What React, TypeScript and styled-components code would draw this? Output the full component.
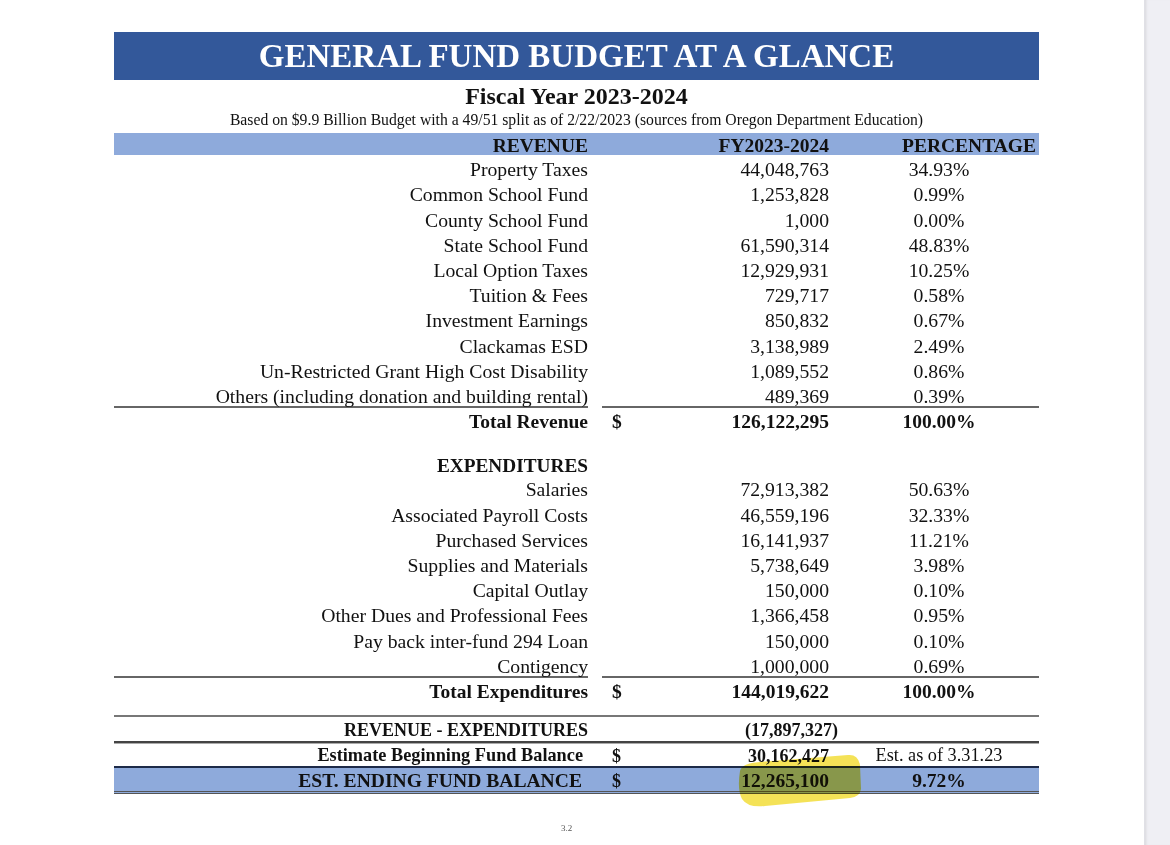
import React from "react";
import styled, { createGlobalStyle, css } from "styled-components";

const GlobalStyle = createGlobalStyle`
  html, body { margin: 0; padding: 0; background: #ffffff; }
  body { font-family: "Liberation Serif", "Times New Roman", serif; color: #111; }
`;

const Screen = styled.div`
  display: flex;
  width: 1170px;
  height: 845px;
  overflow: hidden;
`;

const Page = styled.main`
  flex: 1;
  padding: 32px 0 0 114px;
`;

const SideStrip = styled.aside`
  width: 25px;
  background: #efeff4;
  border-left: 1px solid #e0e0e6;
  box-shadow: inset 3px 0 3px -2px rgba(0, 0, 0, 0.1);
`;

const Sheet = styled.section`
  width: 925px;
  display: flex;
  flex-direction: column;
`;

const TitleBar = styled.h1`
  margin: 0;
  height: 48px;
  background: #33589a;
  color: #ffffff;
  font: bold 33px/48px "Liberation Serif", "Times New Roman", serif;
  text-align: center;
  white-space: nowrap;
`;

const FiscalYear = styled.h2`
  margin: 3px 0 0;
  font: bold 24px/26px "Liberation Serif", "Times New Roman", serif;
  text-align: center;
  white-space: nowrap;
`;

const Subtitle = styled.p`
  margin: 2px 0 0;
  font: 15.7px/17px "Liberation Serif", "Times New Roman", serif;
  text-align: center;
  white-space: nowrap;
`;

type RowProps = {
  $h?: number;
  $rule?: boolean;
  $band?: boolean;
  $topLine?: "gray" | "double" | "navy";
  $bottomDouble?: boolean;
  $mt?: number;
};

const Row = styled.div<RowProps>`
  display: grid;
  grid-template-columns: 474px 14px 44px 183px 210px;
  align-items: stretch;
  height: ${(p) => p.$h ?? 25.2}px;
  margin-top: ${(p) => p.$mt ?? 0}px;
  background: ${(p) => (p.$band ? "#8eaadb" : "transparent")};
  ${(p) =>
    p.$rule &&
    css`
      & > *:not(:nth-child(2)) {
        box-shadow: inset 0 -2px 0 #666;
      }
    `}
  ${(p) =>
    p.$topLine === "gray" &&
    css`
      border-top: 2px solid #777;
    `}
  ${(p) =>
    p.$topLine === "double" &&
    css`
      border-top: 2px solid #444;
      box-shadow: inset 0 1px 0 #aaa;
    `}
  ${(p) =>
    p.$topLine === "navy" &&
    css`
      border-top: 2px solid #1d2a48;
    `}
  ${(p) =>
    p.$bottomDouble &&
    css`
      border-bottom: 3px double #555;
    `}
`;

type CellProps = { $bold?: boolean; $size?: number };

const cellText = css<CellProps>`
  display: flex;
  align-items: center;
  padding-top: 3px;
  white-space: nowrap;
  font-family: "Liberation Serif", "Times New Roman", serif;
  font-weight: ${(p) => (p.$bold ? 700 : 400)};
  font-size: ${(p) => p.$size ?? 19.7}px;
  line-height: 1;
`;

const Label = styled.div<CellProps & { $pr?: number }>`
  ${cellText};
  justify-content: flex-end;
  padding-right: ${(p) => p.$pr ?? 0}px;
`;

const Gap = styled.div``;

const Dollar = styled.div<CellProps>`
  ${cellText};
  justify-content: flex-start;
  padding-left: 10px;
`;

const Amount = styled.div<CellProps & { $hang?: boolean }>`
  ${cellText};
  position: relative;
  justify-content: flex-end;
  margin-right: ${(p) => (p.$hang ? -9 : 0)}px;
`;

const Pct = styled.div<CellProps & { $right?: boolean }>`
  ${cellText};
  justify-content: ${(p) => (p.$right ? "flex-end" : "center")};
  padding-left: ${(p) => (p.$right ? 0 : 10)}px;
  padding-right: ${(p) => (p.$right ? 3 : 0)}px;
`;

const Spacer = styled.div<{ $h: number }>`
  height: ${(p) => p.$h}px;
`;

const Highlight = styled.svg`
  position: absolute;
  left: 89px;
  top: -15px;
  width: 130px;
  height: 58px;
  mix-blend-mode: multiply;
  pointer-events: none;
`;

const PageNumber = styled.div`
  margin-top: 29px;
  padding-right: 20px;
  text-align: center;
  font: 9px/10px "Liberation Serif", "Times New Roman", serif;
  color: #555;
`;

type Line = [string, string, string];

const revenue: Line[] = [
  ["Property Taxes", "44,048,763", "34.93%"],
  ["Common School Fund", "1,253,828", "0.99%"],
  ["County School Fund", "1,000", "0.00%"],
  ["State School Fund", "61,590,314", "48.83%"],
  ["Local Option Taxes", "12,929,931", "10.25%"],
  ["Tuition & Fees", "729,717", "0.58%"],
  ["Investment Earnings", "850,832", "0.67%"],
  ["Clackamas ESD", "3,138,989", "2.49%"],
  ["Un-Restricted Grant High Cost Disability", "1,089,552", "0.86%"],
  ["Others (including donation and building rental)", "489,369", "0.39%"],
];

const expenditures: Line[] = [
  ["Salaries", "72,913,382", "50.63%"],
  ["Associated Payroll Costs", "46,559,196", "32.33%"],
  ["Purchased Services", "16,141,937", "11.21%"],
  ["Supplies and Materials", "5,738,649", "3.98%"],
  ["Capital Outlay", "150,000", "0.10%"],
  ["Other Dues and Professional Fees", "1,366,458", "0.95%"],
  ["Pay back inter-fund 294 Loan", "150,000", "0.10%"],
  ["Contigency", "1,000,000", "0.69%"],
];

function DataRows({ lines }: { lines: Line[] }) {
  return (
    <>
      {lines.map(([label, amount, pct], i) => (
        <Row key={label} $rule={i === lines.length - 1}>
          <Label>{label}</Label>
          <Gap />
          <Dollar />
          <Amount>{amount}</Amount>
          <Pct>{pct}</Pct>
        </Row>
      ))}
    </>
  );
}

export default function App() {
  return (
    <>
      <GlobalStyle />
      <Screen>
        <Page>
          <Sheet>
            <TitleBar>GENERAL FUND BUDGET AT A GLANCE</TitleBar>
            <FiscalYear>Fiscal Year 2023-2024</FiscalYear>
            <Subtitle>
              Based on $9.9 Billion Budget with a 49/51 split as of 2/22/2023 (sources from Oregon
              Department Education)
            </Subtitle>

            <Row $band $h={22} $mt={5}>
              <Label $bold $size={19.5}>REVENUE</Label>
              <Gap />
              <Dollar />
              <Amount $bold $size={19.5}>FY2023-2024</Amount>
              <Pct $bold $size={19.5} $right>PERCENTAGE</Pct>
            </Row>

            <Spacer $h={1} />

            <DataRows lines={revenue} />

            <Row>
              <Label $bold $size={19.5}>Total Revenue</Label>
              <Gap />
              <Dollar $bold $size={19.5}>$</Dollar>
              <Amount $bold $size={19.5}>126,122,295</Amount>
              <Pct $bold $size={19.5}>100.00%</Pct>
            </Row>

            <Spacer $h={18} />

            <Row>
              <Label $bold $size={19.3}>EXPENDITURES</Label>
              <Gap />
              <Dollar />
              <Amount />
              <Pct />
            </Row>

            <DataRows lines={expenditures} />

            <Row>
              <Label $bold $size={19.5}>Total Expenditures</Label>
              <Gap />
              <Dollar $bold $size={19.5}>$</Dollar>
              <Amount $bold $size={19.5}>144,019,622</Amount>
              <Pct $bold $size={19.5}>100.00%</Pct>
            </Row>

            <Spacer $h={11.6} />

            <Row $topLine="gray" $h={24}>
              <Label $bold $size={18}>REVENUE - EXPENDITURES</Label>
              <Gap />
              <Dollar />
              <Amount $bold $size={18} $hang>(17,897,327)</Amount>
              <Pct />
            </Row>

            <Row $topLine="double" $h={23}>
              <Label $bold $size={18.3} $pr={5}>Estimate Beginning Fund Balance</Label>
              <Gap />
              <Dollar $bold $size={18}>$</Dollar>
              <Amount $bold $size={18}>30,162,427</Amount>
              <Pct $size={18.3}>Est. as of 3.31.23</Pct>
            </Row>

            <Row $band $topLine="navy" $bottomDouble $h={23}>
              <Label $bold $size={19.6} $pr={6}>EST. ENDING FUND BALANCE</Label>
              <Gap />
              <Dollar $bold $size={18}>$</Dollar>
              <Amount $bold $size={19.5}>
                12,265,100
                <Highlight viewBox="735 754 130 58" aria-hidden="true">
                  <path
                    d="M740 772 Q742 764 760 763 L848 756 Q858 755 860 766 L861 790 Q860 798 850 799 L765 807 Q748 809 742 800 Q737 790 740 772 Z"
                    fill="#f2dd3a"
                    opacity="0.85"
                  />
                </Highlight>
              </Amount>
              <Pct $bold $size={19.5}>9.72%</Pct>
            </Row>

            <PageNumber>3.2</PageNumber>
          </Sheet>
        </Page>
        <SideStrip />
      </Screen>
    </>
  );
}
